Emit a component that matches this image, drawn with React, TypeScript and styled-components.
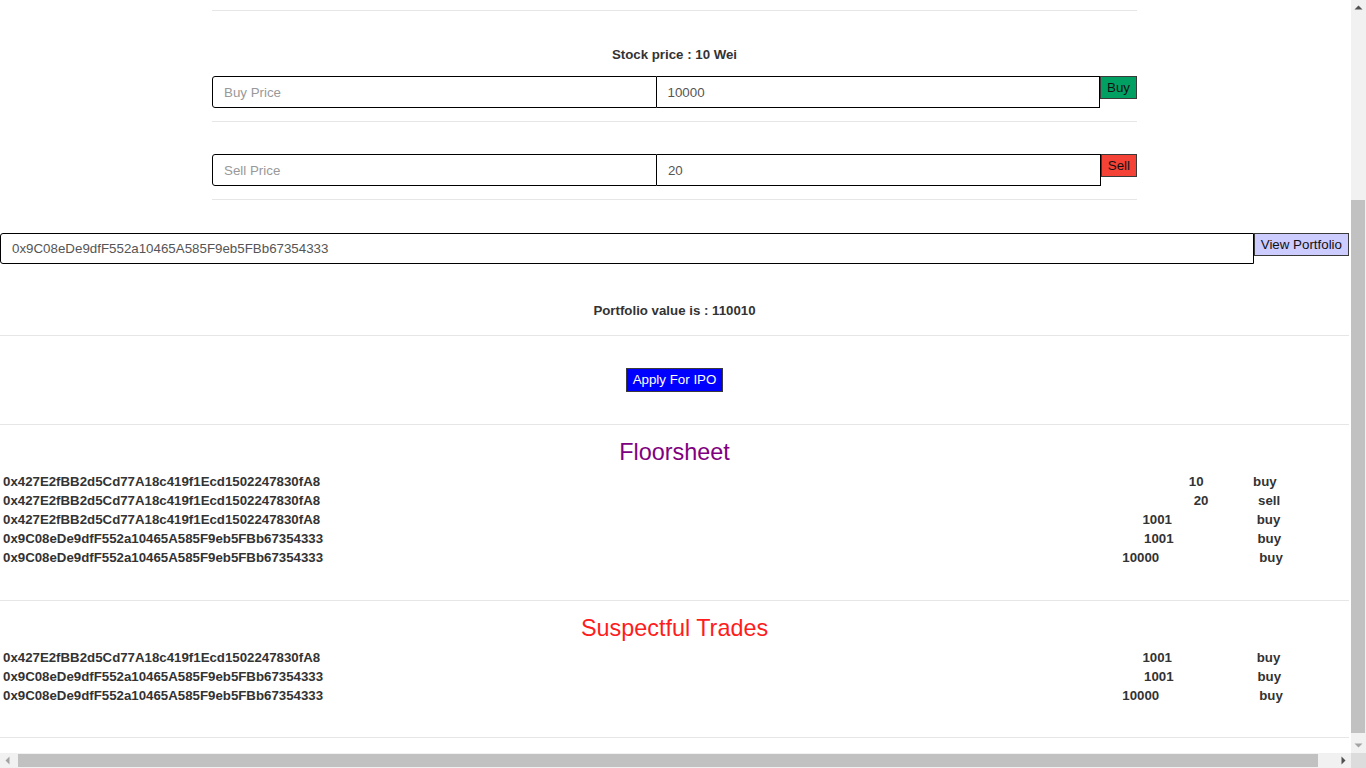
import styled, { createGlobalStyle } from "styled-components";

type Kind = "buy" | "sell";

interface Trade {
  address: string;
  amount: number;
  kind: Kind;
}

const ME = "0x9C08eDe9dfF552a10465A585F9eb5FBb67354333";
const OTHER = "0x427E2fBB2d5Cd77A18c419f1Ecd1502247830fA8";

const floorsheet: Trade[] = [
  { address: OTHER, amount: 10, kind: "buy" },
  { address: OTHER, amount: 20, kind: "sell" },
  { address: OTHER, amount: 1001, kind: "buy" },
  { address: ME, amount: 1001, kind: "buy" },
  { address: ME, amount: 10000, kind: "buy" },
];

const suspectful: Trade[] = [
  { address: OTHER, amount: 1001, kind: "buy" },
  { address: ME, amount: 1001, kind: "buy" },
  { address: ME, amount: 10000, kind: "buy" },
];

const tones = {
  buy: { bg: "#00a063", fg: "#111" },
  sell: { bg: "#f44336", fg: "#111" },
  view: { bg: "#ccccff", fg: "#111" },
  ipo: { bg: "#0000ff", fg: "#fff" },
} as const;
type Tone = keyof typeof tones;

type Dir = "up" | "down" | "left" | "right";
const arrowPoints: Record<Dir, string> = {
  up: "3.5,9.5 11.5,9.5 7.5,5.5",
  down: "3.5,5.5 11.5,5.5 7.5,9.5",
  left: "9.5,3.5 9.5,11.5 5.5,7.5",
  right: "5.5,3.5 5.5,11.5 9.5,7.5",
};

export default function App() {
  return (
    <>
      <GlobalStyle />
      <Frame>
        <Main>
          <Page>
            <Container>
              <Rule />
              <Title $top={34} $bottom={12}>
                Stock price : 10 Wei
              </Title>
              <TradeForm>
                <Field placeholder="Buy Price" $first />
                <Field defaultValue="10000" />
                <ActionButton $tone="buy">Buy</ActionButton>
              </TradeForm>
              <Rule $top={13} />
              <TradeForm $top={32}>
                <Field placeholder="Sell Price" $first />
                <Field defaultValue="20" />
                <ActionButton $tone="sell">Sell</ActionButton>
              </TradeForm>
              <Rule $top={13} />
            </Container>

            <AddressRow>
              <Field defaultValue={ME} $first $height={31} />
              <ActionButton $tone="view">View Portfolio</ActionButton>
            </AddressRow>
            <Title $top={37} $bottom={15}>
              Portfolio value is : 110010
            </Title>
            <Rule />
            <IpoRow>
              <ActionButton $tone="ipo">Apply For IPO</ActionButton>
            </IpoRow>
            <Rule />

            <SectionTitle $color="#800080">Floorsheet</SectionTitle>
            <TradeList trades={floorsheet} />
            <Rule $top={33} />

            <SectionTitle $color="#ff1c1c">Suspectful Trades</SectionTitle>
            <TradeList trades={suspectful} />
            <Rule $top={32} />
          </Page>
        </Main>

        <ScrollBar $vertical>
          <Arrow dir="up" active />
          <Track $vertical $before={185} $after={5}>
            <Thumb />
          </Track>
          <Arrow dir="down" />
        </ScrollBar>
        <ScrollBar>
          <Arrow dir="left" />
          <Track $before={3} $after={18}>
            <Thumb />
          </Track>
          <Arrow dir="right" active />
        </ScrollBar>
        <Corner />
      </Frame>
    </>
  );
}

function TradeList({ trades }: { trades: Trade[] }) {
  return (
    <List>
      {trades.map((t, i) => (
        // one table per trade, so each row spreads its own columns
        <TradeTable key={i}>
          <tbody>
            <tr>
              <td>{t.address}</td>
              <td>{t.amount}</td>
              <td>{t.kind}</td>
            </tr>
          </tbody>
        </TradeTable>
      ))}
    </List>
  );
}

function Arrow({ dir, active }: { dir: Dir; active?: boolean }) {
  return (
    <ArrowBox>
      <svg width="15" height="15" viewBox="0 0 15 15">
        <polygon points={arrowPoints[dir]} fill={active ? "#505050" : "#a3a3a3"} />
      </svg>
    </ArrowBox>
  );
}

const GlobalStyle = createGlobalStyle`
  body {
    margin: 0;
    overflow: hidden;
    font-family: "Liberation Sans", Arial, Helvetica, sans-serif;
    font-size: 14px;
    line-height: 1.42857;
    color: #333;
    background: #fff;
  }
`;

const Frame = styled.div`
  display: grid;
  grid-template-columns: 1fr 15px;
  grid-template-rows: 1fr 15px;
  width: 100vw;
  height: 100vh;
`;

const Main = styled.main`
  min-width: 0;
  min-height: 0;
  overflow: hidden;
  padding-top: 10px;
  box-sizing: border-box;
`;

const Page = styled.div`
  width: 1349px;
`;

const ScrollBar = styled.div<{ $vertical?: boolean }>`
  display: flex;
  flex-direction: ${({ $vertical }) => ($vertical ? "column" : "row")};
  background: #f1f1f1;
`;

const ArrowBox = styled.div`
  flex: none;
  width: 15px;
  height: 15px;

  svg {
    display: block;
  }
`;

const Track = styled.div<{ $vertical?: boolean; $before: number; $after: number }>`
  flex: 1;
  display: flex;
  flex-direction: ${({ $vertical }) => ($vertical ? "column" : "row")};
  padding: ${({ $vertical, $before, $after }) =>
    $vertical ? `${$before}px 1px ${$after}px 0` : `1px ${$after}px 1px ${$before}px`};
`;

const Thumb = styled.div`
  flex: 1;
  background: #c1c1c1;
`;

const Corner = styled.div`
  background: #dcdcdc;
`;

const Container = styled.section`
  width: 925px;
  margin: 0 auto;
`;

const Rule = styled.hr<{ $top?: number }>`
  margin: ${({ $top = 0 }) => $top}px 0 0;
  border: 0;
  border-top: 1px solid #e6e6e6;
`;

const Title = styled.h5<{ $top?: number; $bottom?: number }>`
  margin: ${({ $top = 0 }) => $top}px 0 ${({ $bottom = 0 }) => $bottom}px;
  font-size: 13.28px;
  font-weight: bold;
  line-height: 19px;
  text-align: center;
  color: #333;
`;

const TradeForm = styled.div<{ $top?: number }>`
  display: flex;
  align-items: flex-start;
  margin-top: ${({ $top = 0 }) => $top}px;
`;

const AddressRow = styled.div`
  display: flex;
  align-items: flex-start;
  margin-top: 33px;
`;

const Field = styled.input<{ $first?: boolean; $height?: number }>`
  flex: 1 1 0;
  min-width: 0;
  height: ${({ $height = 32 }) => $height}px;
  box-sizing: border-box;
  margin: 0;
  padding: 0 11px;
  border: 1px solid #000;
  border-left: ${({ $first }) => ($first ? "1px solid #000" : "none")};
  border-radius: ${({ $first }) => ($first ? "3px 0 0 3px" : "0")};
  background: #fff;
  font-family: "Liberation Sans", Arial, sans-serif;
  font-size: 13.33px;
  color: #555;
  outline: none;

  &::placeholder {
    color: #999;
  }
`;

const ActionButton = styled.button<{ $tone: Tone }>`
  flex: none;
  margin: 0;
  padding: 1px 6px;
  border: 1px solid #3a3a3a;
  border-radius: 0;
  background: ${({ $tone }) => tones[$tone].bg};
  color: ${({ $tone }) => tones[$tone].fg};
  font-family: "Liberation Sans", Arial, sans-serif;
  font-size: 13.33px;
  line-height: ${({ $tone }) => ($tone === "ipo" ? 20 : 19)}px;
  cursor: pointer;
`;

const IpoRow = styled.div`
  display: flex;
  justify-content: center;
  padding: 32px 0;
`;

const SectionTitle = styled.h3<{ $color: string }>`
  margin: 15px 0 0;
  font-size: 23.4px;
  font-weight: normal;
  line-height: 24px;
  text-align: center;
  color: ${({ $color }) => $color};
`;

const List = styled.div`
  margin-top: 8px;
`;

const TradeTable = styled.table`
  width: 100%;
  border-spacing: 2px 0;

  td {
    padding: 0 1px;
    font-size: 13.28px;
    font-weight: bold;
    line-height: 19px;
    white-space: nowrap;
    color: #333;
    text-align: left;
  }
`;
